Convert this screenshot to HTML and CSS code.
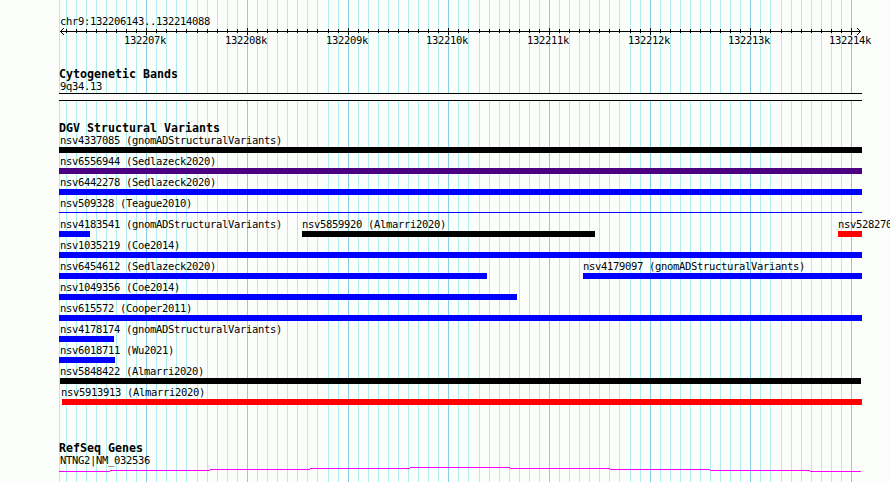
FILE: index.html
```
<!DOCTYPE html>
<html lang="en">
<head>
    <meta charset="UTF-8">
    <title>chr9:132206143..132214088</title>
    <link rel="stylesheet" href="styles.css">
</head>
<body>
    <div class="browser">
        <svg class="grid" width="890" height="482" shape-rendering="crispEdges">
            <path id="minorGrid" class="minor"/>
            <path id="majorGrid" class="major"/>
        </svg>

        <div class="ruler">
            <div class="label">chr9:132206143..132214088</div>
            <svg class="axis" width="803" height="9" shape-rendering="crispEdges">
                <path id="ticks" class="line" d="M1 4.5H802"/>
                <path class="line" d="M4 1.5h1M3 2.5h1M2 3.5h1M2 5.5h1M3 6.5h1M4 7.5h1M798 1.5h1M799 2.5h1M800 3.5h1M800 5.5h1M799 6.5h1M798 7.5h1"/>
            </svg>
            <div class="scale">
                <span>132207k</span>
                <span class="wide">132208k</span>
                <span class="wide">132209k</span>
                <span>132210k</span>
                <span class="wide">132211k</span>
                <span class="wide">132212k</span>
                <span>132213k</span>
                <span class="wide">132214k</span>
            </div>
        </div>

        <div class="track cyto">
            <h3>Cytogenetic Bands</h3>
            <div class="label">9q34.13</div>
            <div class="band"></div>
        </div>

        <div class="track variants">
            <h3>DGV Structural Variants</h3>
            <div class="row"><div class="feature black"><div class="label">nsv4337085 (gnomADStructuralVariants)</div><div class="bar"></div></div></div>
            <div class="row"><div class="feature purple"><div class="label">nsv6556944 (Sedlazeck2020)</div><div class="bar"></div></div></div>
            <div class="row"><div class="feature blue"><div class="label">nsv6442278 (Sedlazeck2020)</div><div class="bar"></div></div></div>
            <div class="row"><div class="feature blue thin"><div class="label">nsv509328 (Teague2010)</div><div class="bar"></div></div></div>
            <div class="row">
                <div class="feature blue" style="width: 31px"><div class="label">nsv4183541 (gnomADStructuralVariants)</div><div class="bar"></div></div>
                <div class="feature inner black" style="margin-left: 212px; width: 293px"><div class="label">nsv5859920 (Almarri2020)</div><div class="bar"></div></div>
                <div class="feature inner red" style="margin-left: 243px; width: 24px"><div class="label">nsv528270</div><div class="bar"></div></div>
            </div>
            <div class="row"><div class="feature blue"><div class="label">nsv1035219 (Coe2014)</div><div class="bar"></div></div></div>
            <div class="row">
                <div class="feature blue" style="width: 428px"><div class="label">nsv6454612 (Sedlazeck2020)</div><div class="bar"></div></div>
                <div class="feature inner blue" style="margin-left: 96px; width: 279px"><div class="label">nsv4179097 (gnomADStructuralVariants)</div><div class="bar"></div></div>
            </div>
            <div class="row"><div class="feature blue" style="width: 458px"><div class="label">nsv1049356 (Coe2014)</div><div class="bar"></div></div></div>
            <div class="row"><div class="feature blue"><div class="label">nsv615572 (Cooper2011)</div><div class="bar"></div></div></div>
            <div class="row"><div class="feature blue" style="width: 55px"><div class="label">nsv4178174 (gnomADStructuralVariants)</div><div class="bar"></div></div></div>
            <div class="row"><div class="feature blue" style="width: 56px"><div class="label">nsv6018711 (Wu2021)</div><div class="bar"></div></div></div>
            <div class="row"><div class="feature inner black" style="margin-left: 1px; width: 801px"><div class="label">nsv5848422 (Almarri2020)</div><div class="bar"></div></div></div>
            <div class="row"><div class="feature inner red" style="margin-left: 3px; width: 800px"><div class="label shifted">nsv5913913 (Almarri2020)</div><div class="bar"></div></div></div>
        </div>

        <div class="track genes">
            <h3>RefSeq Genes</h3>
            <div class="label">NTNG2|NM_032536</div>
            <svg class="intron" width="803" height="5" shape-rendering="crispEdges">
                <path d="M0 4.5H51M51 3.5H151M151 2.5H251M251 1.5H351M351 .5H451M451 1.5H551M551 2.5H651M651 3.5H751M751 4.5H802"/>
            </svg>
        </div>
    </div>

    <script>
        // one line every 100 bp, a darker one every 1000 bp
        var minor = "M59.5 0V482", major = "", ticks = "";
        var wide = [197, 328, 479, 630, 781];
        var x = 66;
        for (var i = 2; i <= 80; i++) {
            if (i % 10 == 0) {
                major += "M" + (x + 0.5) + " 0V482";
                ticks += "M" + (x - 58.5) + " 1V8";
            } else {
                minor += "M" + (x + 0.5) + " 0V482";
                ticks += "M" + (x - 58.5) + " 2V6";
            }
            x += 10;
            if (wide.indexOf(x + 1) >= 0) x++;
        }
        // 66 is the second 100 bp mark, so 132207k falls on 146
        document.getElementById("minorGrid").setAttribute("d", minor);
        document.getElementById("majorGrid").setAttribute("d", major);
        var axis = document.getElementById("ticks");
        axis.setAttribute("d", axis.getAttribute("d") + ticks);
    </script>
</body>
</html>
```
FILE: styles.css
```
body {
    margin: 0;
    background: #fcfefc;
    color: #000;
    font-family: "DejaVu Sans Mono", "Liberation Mono", monospace;
    overflow: hidden;
}
.browser {
    position: relative;
    width: 890px;
    height: 482px;
    box-sizing: border-box;
    padding: 15px 28px 0 59px;
    overflow: hidden;
}
.grid {
    position: absolute;
    left: 0;
    top: 0;
    z-index: -1;
}
.grid path, .axis path, .intron path {
    fill: none;
    stroke-width: 1;
}
.minor {
    stroke: #afeeee;
}
.major {
    stroke: #87ceeb;
}
.line {
    stroke: #000;
}
.label, .scale {
    font-size: 10.5px;
    line-height: 12px;
    letter-spacing: -0.321px;
    white-space: nowrap;
}
.label {
    height: 12px;
    padding-left: 1px;
}
h3 {
    margin: 0;
    height: 12px;
    font-size: 11.63px;
    line-height: 12px;
    font-weight: bold;
}

/* ruler */
.ruler {
    height: 53px;
}
.axis {
    display: block;
}
.scale {
    display: flex;
    height: 12px;
    margin-top: -2px;
    padding-left: 65px;
}
.scale span {
    flex: 0 0 100px;
    width: 100px;
}
.scale .wide {
    margin-left: 1px;
}

/* tracks */
.track {
    width: 803px;
}
.cyto {
    height: 54px;
}
.band {
    height: 6px;
    margin-top: 1px;
    border-top: 1px solid #000;
    border-bottom: 1px solid #000;
    background: #fcfefc;
}
.variants {
    height: 320px;
}
.row {
    display: flex;
    height: 21px;
}
.feature {
    flex: none;
    width: 803px;
}
.inner .label {
    padding-left: 0;
}
.inner .shifted {
    margin-left: -1px;
}
.bar {
    height: 6px;
    margin-top: 1px;
}
.thin .bar {
    height: 1px;
    margin-top: 3px;
}
.black .bar {
    background: #000;
}
.purple .bar {
    background: #4b0082;
}
.blue .bar {
    background: #00f;
}
.red .bar {
    background: #f00;
}
.intron {
    display: block;
    margin-top: 1px;
}
.intron path {
    stroke: #f0f;
}
```
